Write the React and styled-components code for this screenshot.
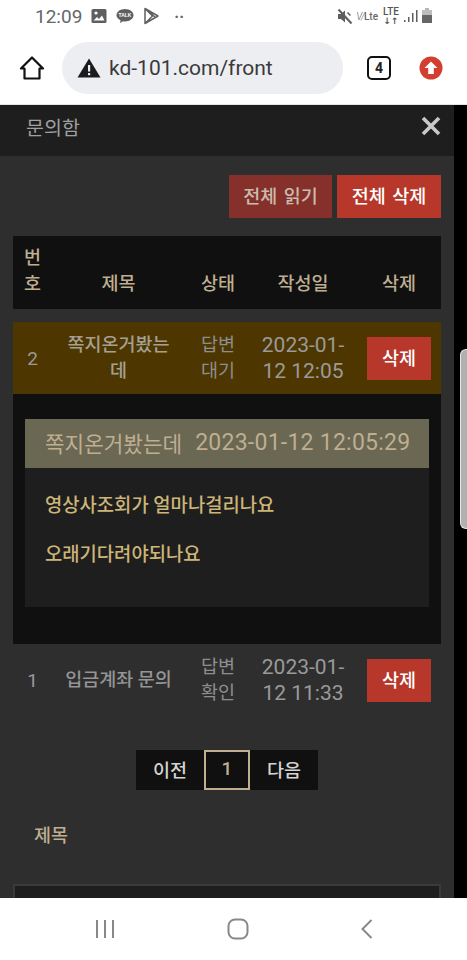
import styled, { createGlobalStyle } from "styled-components";

const rows = [
  { id: 2, title: "쪽지온거봤는데", status: "답변 대기", date: "2023-01-12 12:05", open: true },
  { id: 1, title: "입금계좌 문의", status: "답변 확인", date: "2023-01-12 11:33", open: false },
];

const App = () => {
  return (
    <Screen>
      <GlobalStyle />

      <StatusBar>
        <StatusLeft>
          <Clock>12:09</Clock>
          <svg width="16" height="16" viewBox="0 0 16 16">
            <rect x="0.500" y="1" width="15" height="14" rx="1.500" fill="#5f5f5f" />
            <circle cx="5" cy="5" r="1.600" fill="#fff" />
            <path d="M2.500 12.500l3.500-3.500 2 2 3-3.500 2.500 5z" fill="#fff" />
          </svg>
          <svg width="18" height="16" viewBox="0 0 18 16">
            <path d="M9 1c4.700 0 8.500 2.800 8.500 6.200S13.700 13.400 9 13.400c-.7 0-1.300-.1-1.900-.2L4 15l.6-2.800C2.100 11 .5 9.300.5 7.200.5 3.800 4.300 1 9 1z" fill="#5f5f5f" />
            <TalkLabel x="9" y="9">TALK</TalkLabel>
          </svg>
          <svg width="16" height="18" viewBox="0 0 16 18">
            <path d="M2 1.500v15L15 9z M2 1.500L9.500 9 2 16.500 M5 4l7 6" fill="none" stroke="#5f5f5f" strokeWidth="1.500" strokeLinejoin="round" />
          </svg>
          <Dots>··</Dots>
        </StatusLeft>
        <StatusRight>
          <svg width="16" height="17" viewBox="0 0 16 17">
            <path d="M1 6h3L8 2.500v12L4 11H1z" fill="#5f5f5f" />
            <path d="M1.500 1.500l13 14" stroke="#5f5f5f" strokeWidth="2" />
            <path d="M10.500 4.500l3 3" stroke="#5f5f5f" strokeWidth="1.500" />
          </svg>
          <Volte>
            <VolteMark>V/</VolteMark>Lte
          </Volte>
          <Lte>
            LTE
            <LteArrows>↓↑</LteArrows>
          </Lte>
          <svg width="14" height="14" viewBox="0 0 14 14">
            <rect x="0" y="11" width="1.500" height="2" fill="#5f5f5f" />
            <rect x="4" y="8" width="1.500" height="5" fill="#5f5f5f" />
            <rect x="8" y="4" width="1.500" height="9" fill="#5f5f5f" />
            <rect x="12" y="1" width="1.500" height="12" fill="#5f5f5f" />
          </svg>
          <svg width="12" height="16" viewBox="0 0 12 16">
            <rect x="4" y="0" width="4" height="2" fill="#b5b5b5" />
            <rect x="1" y="2" width="10" height="13" fill="#bdbdbd" />
            <rect x="1" y="7" width="10" height="8" fill="#666" />
          </svg>
        </StatusRight>
      </StatusBar>

      <BrowserBar>
        <svg width="26" height="26" viewBox="0 0 26 26">
          <path d="M13 2.500L2 13.500h3.500v10h15v-10H24z" fill="none" stroke="#111" strokeWidth="2.200" strokeLinejoin="round" />
        </svg>
        <UrlBox>
          <svg width="24" height="20" viewBox="0 0 24 20">
            <path d="M12 0.500L23.500 19.500H0.500z" fill="#1c1c1c" />
            <rect x="11" y="7" width="2.200" height="6.500" fill="#eceef2" />
            <rect x="11" y="15" width="2.200" height="2.200" fill="#eceef2" />
          </svg>
          <UrlText>kd-101.com/front</UrlText>
        </UrlBox>
        <TabCount>4</TabCount>
        <svg width="24" height="24" viewBox="0 0 24 24">
          <circle cx="12" cy="12" r="11.500" fill="#d23f31" />
          <path d="M12 5.500l6.500 6.500h-3.700v6H9.200v-6H5.500z" fill="#fff" />
        </svg>
      </BrowserBar>

      <Viewport>
        <Modal>
          <ModalHeader>
            <ModalTitle>문의함</ModalTitle>
            <svg width="20" height="20" viewBox="0 0 20 20">
              <path d="M2 2l16 16M18 2L2 18" stroke="#c8c8c8" strokeWidth="3.600" />
            </svg>
          </ModalHeader>

          <ModalBody>
            <Actions>
              <ActionButton $dim>전체 읽기</ActionButton>
              <ActionButton>전체 삭제</ActionButton>
            </Actions>

            <HeadRow>
              <HeadCell $left>번호</HeadCell>
              <HeadCell>제목</HeadCell>
              <HeadCell>상태</HeadCell>
              <HeadCell $date>작성일</HeadCell>
              <HeadCell>삭제</HeadCell>
            </HeadRow>

            {rows.map((el) => {
              return (
                <div key={el.id}>
                  <Row $open={el.open}>
                    <NumCell>{el.id}</NumCell>
                    <TitleCell $open={el.open}>{el.title}</TitleCell>
                    <StatusCell>{el.status}</StatusCell>
                    <DateCell>{el.date}</DateCell>
                    <DeleteButton>삭제</DeleteButton>
                  </Row>

                  {el.open && (
                    <Detail>
                      <DetailCard>
                        <DetailHead>
                          <DetailTitle>{el.title}</DetailTitle>
                          <DetailDate>2023-01-12 12:05:29</DetailDate>
                        </DetailHead>
                        <DetailBody>
                          <p>영상사조회가 얼마나걸리나요</p>
                          <p>오래기다려야되나요</p>
                        </DetailBody>
                      </DetailCard>
                    </Detail>
                  )}
                </div>
              );
            })}

            <Pager>
              <PageButton>이전</PageButton>
              <PageNumber>1</PageNumber>
              <PageButton>다음</PageButton>
            </Pager>

            <FieldLabel>제목</FieldLabel>
            <FieldInput />
          </ModalBody>
        </Modal>

        <Gutter>
          <Thumb />
        </Gutter>
      </Viewport>

      <NavBar>
        <svg width="20" height="20" viewBox="0 0 20 20">
          <path d="M2 1v18M10 1v18M18 1v18" stroke="#888" strokeWidth="2" />
        </svg>
        <svg width="22" height="22" viewBox="0 0 22 22">
          <rect x="1.500" y="1.500" width="19" height="19" rx="6.500" fill="none" stroke="#888" strokeWidth="2" />
        </svg>
        <svg width="12" height="22" viewBox="0 0 12 22">
          <path d="M10.500 2L1.500 11l9 9" fill="none" stroke="#888" strokeWidth="2" />
        </svg>
      </NavBar>
    </Screen>
  );
};

export default App;

// styling starts from here

const GlobalStyle = createGlobalStyle`
  html, body {
    margin: 0;
    padding: 0;
    background: #000;
  }

  * {
    box-sizing: border-box;
  }
`;

const Screen = styled.div`
  width: 467px;
  height: 960px;
  display: flex;
  flex-direction: column;
  overflow: hidden;
  font-family: Roboto, "Noto Sans CJK KR", sans-serif;
`;

const StatusBar = styled.div`
  height: 32px;
  flex: none;
  padding: 0 34px 0 35px;
  display: flex;
  justify-content: space-between;
  align-items: center;
  background: #fff;
`;

const StatusLeft = styled.div`
  display: flex;
  align-items: center;
  gap: 9px;
`;

const Clock = styled.span`
  font-size: 19px;
  color: #666;
`;

const TalkLabel = styled.text`
  font-family: "Liberation Sans", sans-serif;
  font-size: 5px;
  font-weight: 700;
  fill: #fff;
  text-anchor: middle;
`;

const Dots = styled.span`
  margin-left: 6px;
  font-size: 16px;
  font-weight: 700;
  color: #666;
`;

const StatusRight = styled.div`
  display: flex;
  align-items: center;
  gap: 3px;
`;

const Volte = styled.span`
  font-size: 10px;
  font-weight: 500;
  color: #666;
`;

const VolteMark = styled.span`
  font-weight: 300;
  font-style: italic;
  letter-spacing: -1px;
`;

const Lte = styled.span`
  margin: 0 2px;
  display: flex;
  flex-direction: column;
  align-items: center;
  font-size: 10px;
  line-height: 10px;
  font-weight: 500;
  color: #555;
`;

const LteArrows = styled.span`
  font-family: "DejaVu Sans", sans-serif;
  font-size: 9px;
  font-weight: 700;
  line-height: 8px;
`;

const BrowserBar = styled.div`
  height: 73px;
  flex: none;
  padding: 0 24px 1px 19px;
  display: flex;
  align-items: center;
  background: #fff;
  border-bottom: 1px solid #e4e4e4;
`;

const UrlBox = styled.div`
  width: 281px;
  height: 52px;
  margin-left: 17px;
  padding: 0 0 0 15px;
  display: flex;
  align-items: center;
  gap: 8px;
  border-radius: 26px;
  background: #eceef2;
`;

const UrlText = styled.span`
  font-size: 21px;
  color: #3a3a3a;
`;

const TabCount = styled.div`
  width: 24px;
  height: 24px;
  margin: 0 28px 0 24px;
  display: flex;
  justify-content: center;
  align-items: center;
  border: 2px solid #111;
  border-radius: 5px;
  font-size: 14px;
  font-weight: 700;
  color: #222;
`;

const Viewport = styled.div`
  flex: 1;
  min-height: 0;
  display: flex;
  overflow: hidden;
`;

const Modal = styled.div`
  width: 454px;
  flex: none;
  background: #2e2e2e;
`;

const ModalHeader = styled.div`
  height: 51px;
  padding: 0 13px 10px 26px;
  display: flex;
  justify-content: space-between;
  align-items: center;
  background: #1e1e1e;
`;

const ModalTitle = styled.span`
  padding-top: 2px;
  font-size: 19.5px;
  color: #a0a0a0;
`;

const ModalBody = styled.div`
  padding: 19px 13px 0;
`;

const Actions = styled.div`
  display: flex;
  justify-content: flex-end;
  gap: 5px;
`;

const ActionButton = styled.button`
  width: ${(props) => (props.$dim ? "103px" : "104px")};
  height: 43px;
  padding: 0 0 3px;
  border: none;
  background: ${(props) => (props.$dim ? "#85302a" : "#b7382b")};
  color: ${(props) => (props.$dim ? "#c9bcae" : "#fff")};
  font-family: inherit;
  font-size: 18.5px;
  font-weight: 500;
  word-spacing: 2px;
`;

const gridColumns = "39px 133px 66px 106px 84px";

const HeadRow = styled.div`
  height: 73px;
  margin: 18px 0 13px;
  padding-bottom: 12px;
  display: grid;
  grid-template-columns: ${gridColumns};
  align-items: end;
  background: #101010;
`;

const HeadCell = styled.div`
  padding: ${(props) => (props.$left ? "0 10px" : props.$date ? "0 2px 0 0" : "0")};
  text-align: center;
  font-size: 18.5px;
  line-height: 26px;
  font-weight: 500;
  color: #bfae90;
`;

const Row = styled.div`
  height: 72px;
  display: grid;
  grid-template-columns: ${gridColumns};
  align-items: center;
  text-align: center;
  background: ${(props) => (props.$open ? "#4d3600" : "transparent")};
  color: #9a9a9a;
`;

const NumCell = styled.div`
  font-size: 19px;
`;

const TitleCell = styled.div`
  padding: 0 12px;
  font-size: 18.5px;
  line-height: 26px;
  font-weight: 500;
  color: ${(props) => (props.$open ? "#a5a092" : "#959595")};
`;

const StatusCell = styled.div`
  padding: 0 15px;
  font-size: 18.5px;
  line-height: 26px;
  color: #8e8e8e;
`;

const DateCell = styled.div`
  padding: 0 12px 0 10px;
  font-size: 21px;
  line-height: 26px;
`;

const DeleteButton = styled.button`
  width: 64px;
  height: 43px;
  justify-self: center;
  padding: 0 0 3px;
  border: none;
  background: #b7382b;
  color: #fff;
  font-family: inherit;
  font-size: 18.5px;
  font-weight: 500;
`;

const Detail = styled.div`
  height: 250px;
  padding: 25px 12px 0;
  background: #101010;
`;

const DetailCard = styled.div`
  height: 188px;
  background: #1e1e1e;
`;

const DetailHead = styled.div`
  height: 49px;
  padding: 0 0 2px 20px;
  display: flex;
  align-items: center;
  gap: 13px;
  white-space: nowrap;
  background: #6a6753;
  color: #bfae90;
`;

const DetailTitle = styled.span`
  font-size: 21.3px;
`;

const DetailDate = styled.span`
  font-size: 23px;
  letter-spacing: 0.25px;
`;

const DetailBody = styled.div`
  padding: 25px 20px 0;
  font-size: 18.8px;
  line-height: 26px;
  font-weight: 500;
  color: #cdb578;

  p {
    margin: 0 0 23px;
  }
`;

const Pager = styled.div`
  width: 182px;
  height: 40px;
  margin: 34px auto 0;
  display: flex;
  background: #101010;
`;

const PageButton = styled.div`
  flex: 1;
  padding-bottom: 3px;
  display: flex;
  justify-content: center;
  align-items: center;
  font-size: 18.5px;
  font-weight: 500;
  color: #d4d4d4;
`;

const PageNumber = styled.div`
  width: 46px;
  flex: none;
  padding-bottom: 3px;
  display: flex;
  justify-content: center;
  align-items: center;
  border: 2px solid #bfae90;
  font-size: 19px;
  font-weight: 500;
  color: #bfae90;
`;

const FieldLabel = styled.div`
  margin: 33px 0 0 21px;
  font-size: 18.5px;
  line-height: 26px;
  font-weight: 500;
  color: #bfae90;
`;

const FieldInput = styled.div`
  height: 60px;
  margin-top: 35px;
  border: 2px solid #3a3a3a;
  background: #1e1e1e;
`;

const Gutter = styled.div`
  flex: 1;
  position: relative;
  background: #000;
`;

const Thumb = styled.div`
  position: absolute;
  top: 244px;
  left: 6px;
  width: 8px;
  height: 180px;
  border: 1px solid #e6e6e6;
  border-right: none;
  border-radius: 6px 0 0 6px;
  background: #b0b0b0;
`;

const NavBar = styled.div`
  height: 62px;
  flex: none;
  padding: 0 94px 0 95px;
  display: flex;
  justify-content: space-between;
  align-items: center;
  background: #fff;
`;
